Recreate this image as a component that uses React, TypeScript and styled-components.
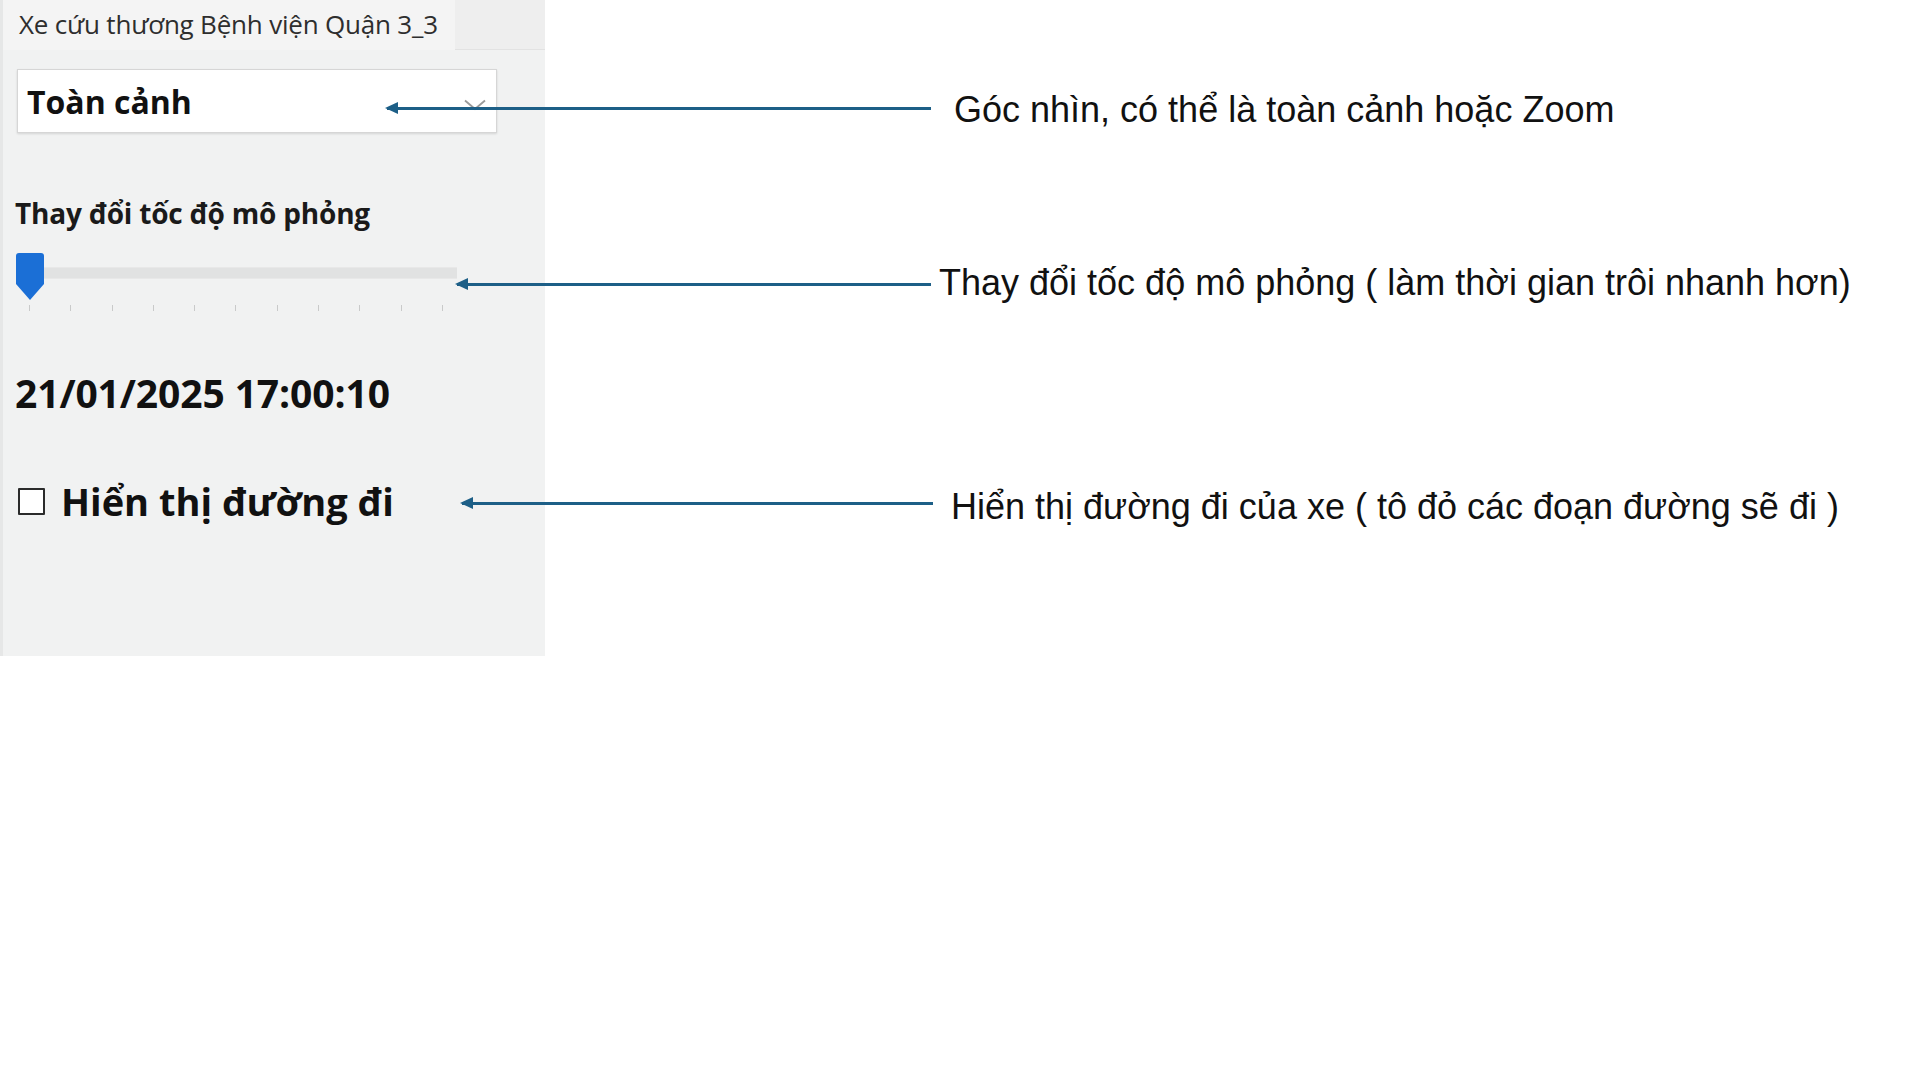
import React from "react";
import styled, { createGlobalStyle } from "styled-components";

const GlobalStyle = createGlobalStyle`
  html, body {
    margin: 0;
    padding: 0;
    background: #ffffff;
  }
  body {
    font-family: "Open Sans", "Noto Sans", sans-serif;
  }
`;

const Page = styled.div`
  position: relative;
  width: 1920px;
  height: 1080px;
  background: #ffffff;
  overflow: hidden;
`;

const Panel = styled.div`
  width: 542px;
  height: 656px;
  background: #f1f2f2;
  border-left: 3px solid #e6e7e7;
  display: flex;
  flex-direction: column;
  font-family: "Open Sans", "Noto Sans", sans-serif;
  color: #111111;
`;

const Header = styled.div`
  display: flex;
  height: 49px;
  background: #eeeeee;
  border-bottom: 1px solid #e2e2e2;
`;

const Tab = styled.div`
  display: flex;
  align-items: center;
  width: 452px;
  height: 50px;
  box-sizing: border-box;
  padding: 0 0 2px 16px;
  background: #f4f4f4;
  font-size: 26px;
  color: #2e2e2e;
  letter-spacing: -0.2px;
  white-space: nowrap;
`;

const Body = styled.div`
  display: flex;
  flex-direction: column;
  padding: 19px 0 0 14px;
`;

const Select = styled.div`
  display: flex;
  align-items: center;
  justify-content: space-between;
  width: 480px;
  height: 64px;
  box-sizing: border-box;
  padding: 0 10px 0 9px;
  background: #ffffff;
  border: 1px solid #d6d6d6;
  box-shadow: 0 1px 2px rgba(0, 0, 0, 0.12);
  font-size: 32px;
  font-weight: 700;
  color: #111111;

  svg {
    margin-top: 8px;
  }
`;

const SectionLabel = styled.div`
  margin-top: 61px;
  margin-left: -2px;
  font-size: 28px;
  font-weight: 700;
  letter-spacing: -0.2px;
  line-height: 38px;
  color: #1a1a1a;
`;

const Slider = styled.div`
  position: relative;
  width: 441px;
  height: 60px;
  margin-top: 21px;
  margin-left: -1px;
`;

const Track = styled.div`
  margin-top: 14px;
  height: 10px;
  background: #e1e2e2;
  border-top: 1px solid #e8e8e8;
  border-bottom: 1px solid #e8e8e8;
`;

const Thumb = styled.div`
  position: absolute;
  left: 0;
  top: 0;
  width: 28px;
  height: 47px;
  background: #1b6fd6;
  border-radius: 3px 3px 0 0;
  clip-path: polygon(0 0, 100% 0, 100% 66%, 50% 100%, 0 66%);
`;

const Ticks = styled.div`
  display: flex;
  justify-content: space-between;
  width: 414px;
  margin: 26px 0 0 13px;
`;

const Tick = styled.span`
  width: 1px;
  height: 6px;
  background: #c9caca;
`;

const DateText = styled.div`
  margin-top: 54px;
  margin-left: -2px;
  font-size: 39px;
  font-weight: 700;
  line-height: 52px;
  letter-spacing: -0.1px;
  color: #111111;
`;

const CheckRow = styled.label`
  display: flex;
  align-items: center;
  gap: 16px;
  margin-top: 56px;
  margin-left: 1px;
  font-size: 38px;
  font-weight: 700;
  line-height: 52px;
  color: #111111;
`;

const Box = styled.span`
  width: 27px;
  height: 27px;
  box-sizing: border-box;
  border: 2px solid #2b2b2b;
  background: #ffffff;
  border-radius: 1px;
  flex: none;
`;

const Callout = styled.div<{ $top: number; $left: number }>`
  position: absolute;
  top: ${(p) => p.$top}px;
  left: ${(p) => p.$left}px;
  height: 44px;
  display: flex;
  align-items: center;
`;

const ArrowLine = styled.div<{ $width: number }>`
  position: relative;
  width: ${(p) => p.$width}px;
  height: 3px;
  background: #1d5f87;
  flex: none;

  &::before {
    content: "";
    position: absolute;
    left: -2px;
    top: -5px;
    border-top: 6.5px solid transparent;
    border-bottom: 6.5px solid transparent;
    border-right: 13px solid #1d5f87;
  }
`;

const CalloutText = styled.span<{ $gap: number; $dy: number }>`
  margin-left: ${(p) => p.$gap}px;
  position: relative;
  top: ${(p) => p.$dy}px;
  font-family: "Liberation Sans", Arial, sans-serif;
  font-size: 36px;
  color: #111111;
  white-space: nowrap;
`;

const Chevron = () => (
  <svg width="22" height="12" viewBox="0 0 22 12" fill="none">
    <path d="M1 1.5 L11 10 L21 1.5" stroke="#9b9b9b" strokeWidth="1.8" />
  </svg>
);

const callouts = [
  { top: 86, left: 387, width: 544, gap: 23, dy: 2, text: "Góc nhìn, có thể là toàn cảnh hoặc Zoom" },
  { top: 262, left: 457, width: 474, gap: 8, dy: -1, text: "Thay đổi tốc độ mô phỏng ( làm thời gian trôi nhanh hơn)" },
  { top: 481, left: 462, width: 471, gap: 18, dy: 4, text: "Hiển thị đường đi của xe ( tô đỏ các đoạn đường sẽ đi )" },
];

export default function App() {
  return (
    <>
      <GlobalStyle />
      <Page>
        <Panel>
          <Header>
            <Tab>Xe cứu thương Bệnh viện Quận 3_3</Tab>
          </Header>
          <Body>
            <Select>
              <span>Toàn cảnh</span>
              <Chevron />
            </Select>
            <SectionLabel>Thay đổi tốc độ mô phỏng</SectionLabel>
            <Slider>
              <Track />
              <Thumb />
              <Ticks>
                {Array.from({ length: 11 }).map((_, i) => (
                  <Tick key={i} />
                ))}
              </Ticks>
            </Slider>
            <DateText>21/01/2025 17:00:10</DateText>
            <CheckRow>
              <Box />
              <span>Hiển thị đường đi</span>
            </CheckRow>
          </Body>
        </Panel>
        {callouts.map((c) => (
          <Callout key={c.text} $top={c.top} $left={c.left}>
            <ArrowLine $width={c.width} />
            <CalloutText $gap={c.gap} $dy={c.dy}>
              {c.text}
            </CalloutText>
          </Callout>
        ))}
      </Page>
    </>
  );
}
